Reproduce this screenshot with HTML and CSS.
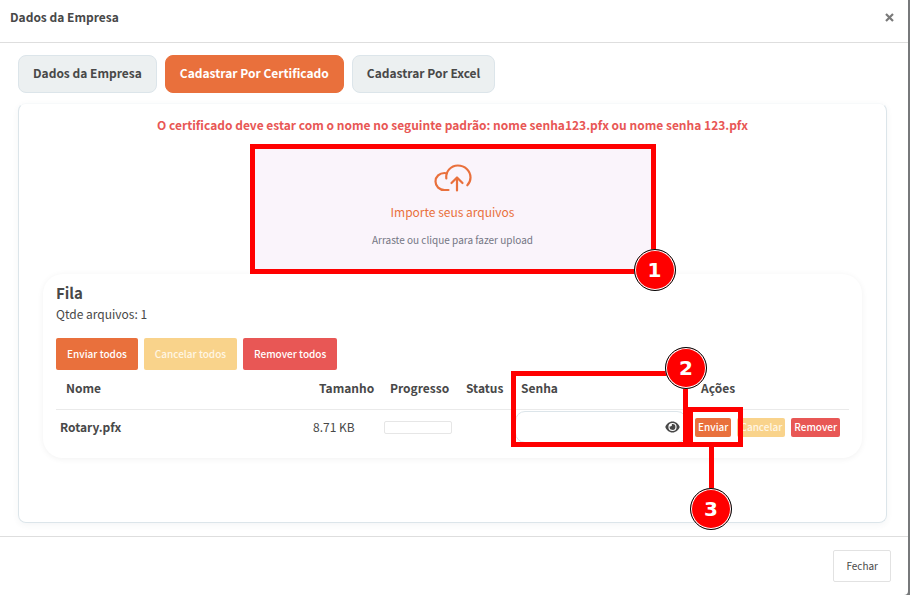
FILE: index.html
```html
<!DOCTYPE html>
<html lang="pt-BR">
<head>
<meta charset="utf-8">
<title>Dados da Empresa</title>
<link rel="stylesheet" href="styles.css">
</head>
<body>
<div class="modal" role="dialog" aria-labelledby="modal-title">
  <header class="modal-header">
    <h1 class="modal-title" id="modal-title">Dados da Empresa</h1>
    <button class="close" type="button" aria-label="Fechar janela">
      <svg width="9" height="9" viewBox="0 0 9 9"><path d="M1 1l7 7M8 1L1 8" fill="none" stroke="#7a7a7a" stroke-width="2.2"/></svg>
    </button>
  </header>
  <main class="modal-body">
    <nav class="tabs">
      <button class="tab" type="button">Dados da Empresa</button>
      <button class="tab active" type="button">Cadastrar Por Certificado</button>
      <button class="tab" type="button">Cadastrar Por Excel</button>
    </nav>
    <section class="panel">
      <p class="warning">O certificado deve estar com o nome no seguinte padrão: nome senha123.pfx ou nome senha 123.pfx</p>
      <div class="dropzone">
        <button class="drop-button" type="button">
          <svg class="cloud" width="38" height="28" viewBox="0 0 38 28" fill="none" stroke="#e9703c" stroke-width="2.2" stroke-linecap="round" stroke-linejoin="round">
            <path d="M14.500 26H10.500C5.500 26 1.500 22.500 1.500 17.500S5.500 9 10.500 9c1 0 1.600.1 2.300.4"/>
            <path d="M12.300 14.500c-.8-7 4.500-13 11.500-13 7 0 12.700 5.200 12.700 12 0 3-1 5.500-3.200 7.800"/>
            <path d="M23 26.500V13.500M17.500 19l5.500-5.500 5.500 5.500"/>
          </svg>
          <span class="drop-title">Importe seus arquivos</span>
          <span class="drop-hint">Arraste ou clique para fazer upload</span>
        </button>
        <span class="badge badge-one">1</span>
      </div>
      <section class="queue">
        <h2 class="queue-title">Fila</h2>
        <p class="queue-count">Qtde arquivos: 1</p>
        <div class="bulk">
          <button class="btn send" type="button">Enviar todos</button>
          <button class="btn cancel" type="button">Cancelar todos</button>
          <button class="btn remove" type="button">Remover todos</button>
        </div>
        <table class="files">
          <colgroup>
            <col><col class="col-size"><col class="col-progress"><col class="col-status"><col class="col-password"><col class="col-actions">
          </colgroup>
          <thead>
            <tr><th>Nome</th><th>Tamanho</th><th>Progresso</th><th>Status</th><th><label for="senha">Senha</label></th><th>Ações</th></tr>
          </thead>
          <tbody>
            <tr>
              <td class="name">Rotary.pfx</td>
              <td>8.71 KB</td>
              <td><div class="progress"></div></td>
              <td></td>
              <td>
                <div class="password">
                  <input id="senha" type="password">
                  <button class="eye" type="button" aria-label="Mostrar senha">
                    <svg width="15" height="12" viewBox="0 0 15 12"><path fill="#484848" fill-rule="evenodd" d="M7.500.500C4 .500 1.500 2.900.300 6 1.500 9.100 4 11.500 7.500 11.500S13.500 9.100 14.700 6C13.500 2.900 11 .500 7.500.500zM7.500 1.900a4.100 4.100 0 1 1 0 8.200 4.100 4.100 0 0 1 0-8.200z"/><path fill="#484848" d="M7.500 3.100A2.900 2.900 0 1 1 4.700 5.300a1.500 1.500 0 0 0 2.100-1.900c.2-.2.400-.3.700-.3z"/></svg>
                  </button>
                  <span class="frame frame-two"></span>
                  <span class="badge badge-two">2</span>
                </div>
              </td>
              <td>
                <div class="actions">
                  <button class="btn small send" type="button">Enviar</button>
                  <button class="btn small cancel" type="button">Cancelar</button>
                  <button class="btn small remove" type="button">Remover</button>
                  <span class="frame frame-three"></span>
                  <span class="stem"></span>
                  <span class="badge badge-three">3</span>
                </div>
              </td>
            </tr>
          </tbody>
        </table>
      </section>
    </section>
  </main>
  <footer class="modal-footer">
    <button class="dismiss" type="button">Fechar</button>
  </footer>
</div>
</body>
</html>
```
FILE: styles.css
```css
* { box-sizing: border-box; }
body {
  margin: 0;
  background: #77797b;
  color: #484848;
  font: 12px/18px "Noto Sans CJK SC", "Noto Sans", sans-serif;
}
button, input { font: inherit; color: inherit; margin: 0; }
button { padding: 0; border: 0; background: none; }
h1, h2, p { margin: 0; }

.modal {
  display: flex;
  flex-direction: column;
  min-height: 100vh;
  margin-right: 2px;
  background: #fff;
  border-radius: 0 0 4px 0;
}
.modal-header {
  display: flex;
  align-items: center;
  justify-content: space-between;
  padding: 8px 14px 16px 10px;
  border-bottom: 1px solid #dedede;
}
.modal-title { font-size: 12px; line-height: 18px; font-weight: 700; }
.close { display: flex; }
.modal-body { flex: 1; padding: 12px 21px 13px 18px; }

.tabs { display: flex; gap: 8px; margin-bottom: 10px; }
.tab {
  height: 38px;
  padding: 0 14px 2px;
  border: 1px solid #dce5ea;
  border-radius: 8px;
  background: #ecf0f1;
  font-weight: 700;
  white-space: nowrap;
}
.tab.active { background: #e9703c; border-color: #e9703c; color: #fff; }

.panel {
  padding: 12px 24px 64px;
  border: 1px solid #dce5ea;
  border-top-color: #f7f9fa;
  border-radius: 8px;
  box-shadow: 0 2px 6px rgba(60, 80, 100, .06);
}
.warning { text-align: center; font-weight: 700; color: #e85755; }

.dropzone {
  position: relative;
  width: 406px;
  max-width: 100%;
  margin: 10px auto 0;
  border: 5px solid #f00;
  background: #faf4fb;
}
.drop-button {
  display: flex;
  flex-direction: column;
  align-items: center;
  width: 100%;
  padding: 15px 0 21px;
}
.drop-title { margin-top: 11px; line-height: 18px; color: #e9703c; }
.drop-hint { margin-top: 11px; font-size: 10px; line-height: 16px; color: #747684; }

.queue {
  padding: 9px 13px 13px;
  border-radius: 20px;
  box-shadow: 0 1px 6px rgba(0, 0, 0, .06);
}
.queue-title { font-size: 15px; line-height: 20px; font-weight: 700; }
.queue-count { margin-top: 2px; line-height: 18px; }
.bulk { display: flex; gap: 6px; margin-top: 15px; }
.btn {
  height: 32px;
  padding: 0 11px;
  border-radius: 2px;
  color: #fff;
  font-size: 10px;
  font-weight: 500;
  line-height: 16px;
  white-space: nowrap;
}
.send { background: #e9703c; }
.cancel { background: #f9d38b; color: #fff6e4; }
.remove { background: #e85755; }
.btn.small { height: 19px; padding: 0 3px; }

.files { width: 100%; table-layout: fixed; border-collapse: collapse; }
.col-size { width: 71px; }
.col-progress { width: 76px; }
.col-status { width: 55px; }
.col-password { width: 180px; }
.col-actions { width: 158px; }
.files th {
  height: 39px;
  padding: 0 0 2px 10px;
  text-align: left;
  font-weight: 700;
  border-bottom: 1px solid #eaeaea;
}
.files td { height: 36px; padding: 0 4px; }
.name { font-weight: 700; }
.progress { height: 13px; width: 68px; border: 1px solid #e6e6e6; border-radius: 2px; }
.password { position: relative; display: flex; align-items: center; }
.password input {
  width: 100%;
  height: 32px;
  padding: 0 32px 0 10px;
  border: 1px solid #dce5ea;
  border-radius: 10px;
  background: #fff;
}
.eye { position: absolute; right: 7px; display: flex; }
.actions { position: relative; display: flex; gap: 6px; }

.frame { position: absolute; border: 5px solid #f00; pointer-events: none; }
.frame-two { top: -40px; bottom: -4px; left: -4px; right: -1px; }
.frame-three { top: -11px; left: -7px; width: 55px; height: 40px; }
.stem { position: absolute; top: 29px; left: 14px; width: 5px; height: 42px; background: #f00; }
.badge {
  position: absolute;
  z-index: 1;
  width: 42px;
  height: 42px;
  border: 1px solid #fff;
  border-radius: 50%;
  outline: 1px solid #000;
  outline-offset: -1px;
  background: #f00;
  box-shadow: inset 0 0 0 1px #fff;
  color: #fff;
  font: 700 20px/40px "DejaVu Sans", sans-serif;
  text-align: center;
}
.badge-one { right: -25px; bottom: -22px; }
.badge-two { right: -20px; top: -64px; }
.badge-three { left: -5px; top: 70px; }

.modal-footer {
  display: flex;
  justify-content: flex-end;
  padding: 13px 17px;
  border-top: 1px solid #dedede;
}
.dismiss {
  height: 32px;
  padding: 0 12px;
  border: 1px solid #e2e2e2;
  border-radius: 2px;
  background: #fff;
  font-size: 10px;
}
```
